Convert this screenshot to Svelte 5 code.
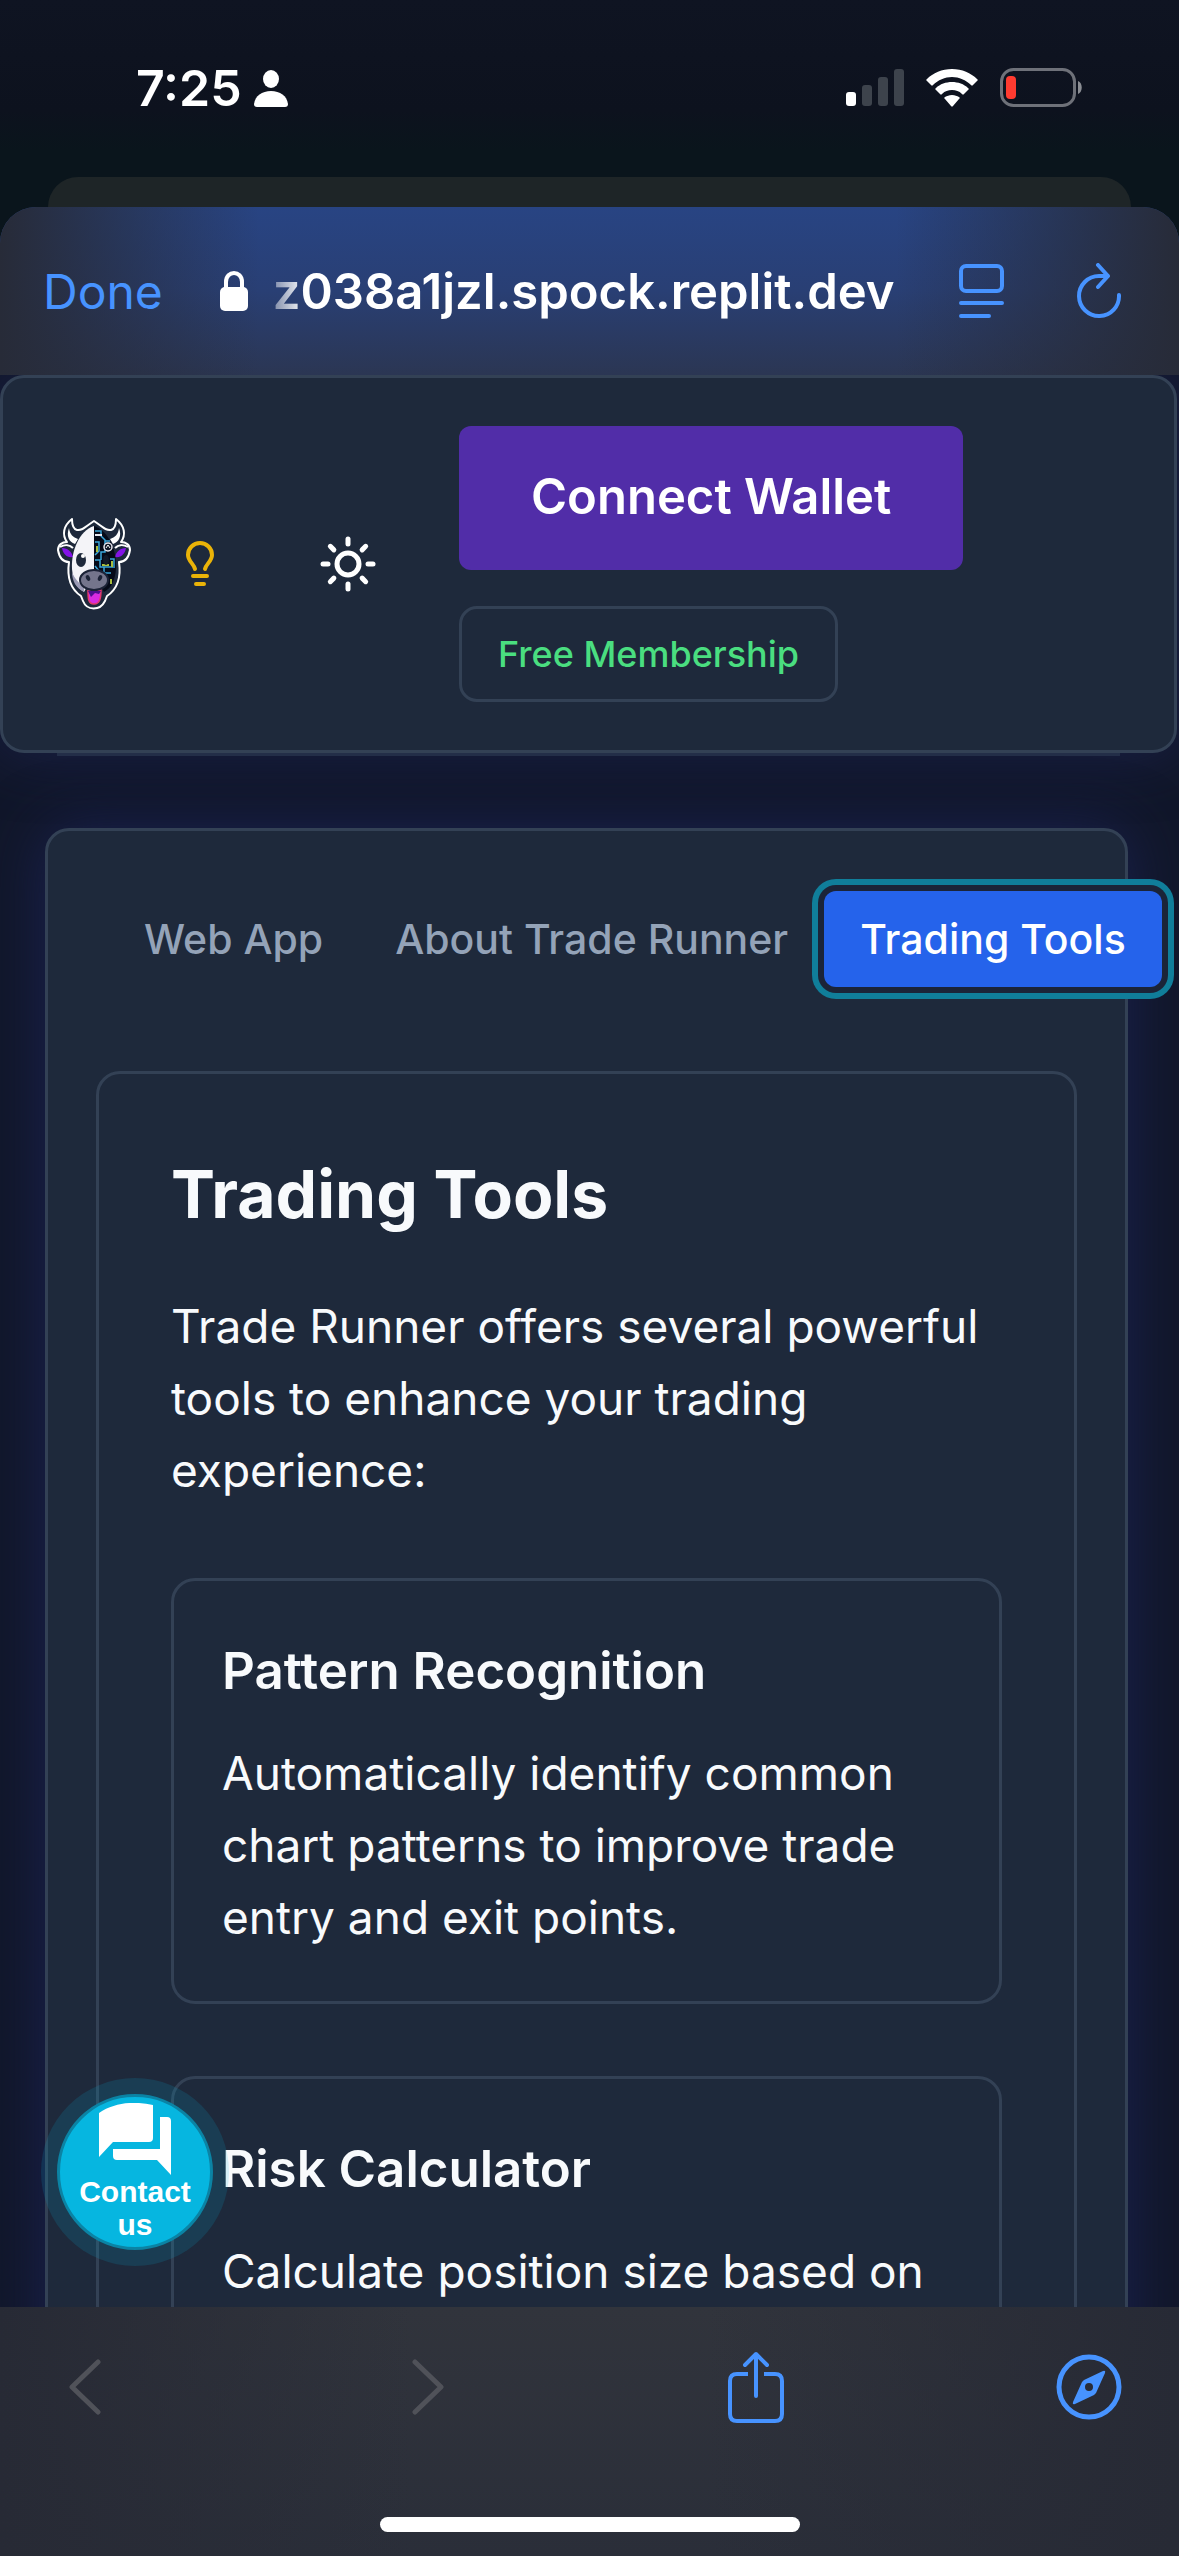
<script>
  const tabs = ['Web App', 'About Trade Runner', 'Trading Tools'];
  let active = $state('Trading Tools');
  const tools = [
    {
      title: 'Pattern Recognition',
      text: 'Automatically identify common chart patterns to improve trade entry and exit points.'
    },
    {
      title: 'Risk Calculator',
      text: 'Calculate position size based on'
    }
  ];
  const rays = [0, 45, 90, 135, 180, 225, 270, 315];
</script>

<div class="phone">
  <header class="status">
    <div class="clock">
      <span>7:25</span>
      <svg width="34" height="37" viewBox="0 0 34 37" fill="#fff" aria-hidden="true">
        <ellipse cx="17" cy="9" rx="8" ry="9" />
        <path d="M3 37C1 37 0 36 0 34 1 26 8 21 17 21s16 5 17 13c0 2-1 3-3 3z" />
      </svg>
    </div>
    <div class="signals">
      <svg width="58" height="38" viewBox="0 0 58 38" aria-hidden="true">
        <rect x="0" y="23" width="10" height="14" rx="3" fill="#fff" />
        <g fill="#3d434c">
          <rect x="16" y="16" width="10" height="21" rx="3" />
          <rect x="32" y="8" width="10" height="29" rx="3" />
          <rect x="48" y="0" width="10" height="37" rx="3" />
        </g>
      </svg>
      <svg width="52" height="38" viewBox="0 0 52 38" fill="#fff" aria-hidden="true">
        <path d="M26 0C36 0 45 4 51 10c1 1 1 1 0 2l-4 4c-1 1-1 1-2 0-5-5-12-8-19-8S12 11 7 16c-1 1-1 1-2 0l-4-4c-1-1-1-1 0-2C7 4 16 0 26 0z" />
        <path d="M26 13c6 0 12 2 16 6 1 1 1 1 0 2l-4 4c-1 1-1 1-2 0-3-3-6-4-10-4s-7 1-10 4c-1 1-1 1-2 0l-4-4c-1-1-1-1 0-2 4-4 10-6 16-6z" />
        <path d="M26 26c3 0 5 1 7 2 1 1 1 1 0 2l-6 7c-1 1-1 1-2 0l-6-7c-1-1-1-1 0-2 2-1 4-2 7-2z" />
      </svg>
      <svg width="83" height="40" viewBox="0 0 83 40" aria-hidden="true">
        <rect x="1.500" y="1.500" width="73" height="36" rx="12" fill="none" stroke="#6e7179" stroke-width="3" />
        <rect x="6" y="8" width="10" height="23" rx="4" fill="#ff3b30" />
        <path d="M78 13c5 2 5 11 0 13z" fill="#8a8d93" />
      </svg>
    </div>
  </header>

  <div class="sheet-behind"></div>

  <section class="sheet">
    <div class="browser-bar">
      <button class="done">Done</button>
      <div class="address">
        <svg width="30" height="40" viewBox="0 0 30 40" aria-hidden="true">
          <path d="M7 19V11c0-12 16-12 16 0v8" fill="none" stroke="#fff" stroke-width="4" />
          <rect x="1" y="16" width="28" height="24" rx="5" fill="#fff" />
        </svg>
        <span class="url">z038a1jzl.spock.replit.dev</span>
      </div>
      <button class="icon" aria-label="Page menu">
        <svg width="46" height="56" viewBox="0 0 46 56" fill="none" stroke="#4793ff" stroke-width="4" stroke-linecap="round">
          <rect x="2" y="3" width="41" height="25" rx="5" />
          <path d="M2 40h41M2 53h28" />
        </svg>
      </button>
      <button class="icon" aria-label="Reload">
        <svg width="46" height="56" viewBox="0 0 46 56" fill="none" stroke="#4793ff" stroke-width="4" stroke-linecap="round" stroke-linejoin="round">
          <path d="M42 32A20 20 0 1 1 22 13h9M21 2l10 11-10 11" />
        </svg>
      </button>
    </div>

    <div class="page">
      <div class="topbar">
        <svg class="logo" width="74" height="94" viewBox="0 0 74 94" aria-label="Trade Runner" role="img">
          <path d="M15 2C6 9 5 18 10 25 5 25 1 28 1 33c1 6 4 12 11 12-2 14 0 26 12 34l2 5c4 10 17 10 22 0l2-5c12-8 14-20 12-34 7 0 10-6 11-12 0-5-4-8-9-8 5-7 4-16-5-23 0 6-1 10-5 11-6 1-9-4-17-9-8 5-11 10-17 9-4-1-5-5-5-11z" fill="#1e293b" stroke="#fff" stroke-width="2" stroke-linejoin="round" />
          <path d="M12 11c1 7 4 9 9 11l-3 5c-6-2-9-8-6-16zM62 11c-1 7-4 9-9 11l3 5c6-2 9-8 6-16z" fill="#fff" />
          <path d="M3 30c5-3 10-2 13 1M71 30c-5-3-10-2-13 1" fill="none" stroke="#fff" stroke-width="2" />
          <path d="M5 31c6 0 10 4 11 9-6 1-10-3-11-9zM69 31c-6 0-10 4-11 9 6 1 10-3 11-9z" fill="#8312e6" />
          <path d="M37 9C22 14 14 34 15 52c1 12 5 19 12 23l10-18z" fill="#f4f4f8" />
          <path d="M37 9c15 5 23 25 22 43-1 12-5 19-12 23L37 57z" fill="#050a18" />
          <path d="M15 55c3 8 7 10 12 16v4c-8-4-12-11-12-20z" fill="#9a9ab4" />
          <g fill="none" stroke="#3aa5d8" stroke-width="1.500">
            <path d="M38 14h6v5l4 4v12h-4v8M38 25h4v9l-4 4M38 43h5v7h15M48 24h5M53 42h4v7M47 50v6h7M38 49l4 5" />
          </g>
          <path d="M40 29v6M55 44v6M54 62v5M45 48h7" stroke="#a8bd3d" stroke-width="2" />
          <path d="M38 18h7" stroke="#e8e8f0" stroke-width="2" />
          <circle cx="51" cy="30" r="4" fill="#111827" stroke="#e8e8f0" stroke-width="1.500" />
          <path d="M49 31l2-3 2 3" fill="none" stroke="#fff" />
          <ellipse cx="24" cy="43" rx="5" ry="7" fill="#1e293b" />
          <circle cx="26" cy="39" r="2" fill="#fff" />
          <ellipse cx="49" cy="43" rx="3" ry="5" fill="#111827" />
          <path d="M31 73h13c0 8-1 14-7 14s-6-6-6-14z" fill="#d62be0" stroke="#e23a6c" stroke-width="1.500" />
          <path d="M31 74h13l-2 3-4-1-4 4z" fill="#4a0f8c" />
          <ellipse cx="37" cy="63" rx="14" ry="10" fill="#74758c" stroke="#1b2236" stroke-width="2" />
          <ellipse cx="31" cy="61" rx="2" ry="3" fill="#1b2236" transform="rotate(-25 31 61)" />
          <ellipse cx="43" cy="61" rx="2" ry="3" fill="#1b2236" transform="rotate(25 43 61)" />
        </svg>
        <button class="tip" aria-label="Tips">
          <svg width="30" height="46" viewBox="0 0 30 46" fill="none" stroke="#eab308" stroke-width="4" stroke-linecap="round">
            <path d="M10 28C9 23 3 20 3 14a12 12 0 0 1 24 0c0 6-6 9-7 14M8 35h14M11 43h8" />
          </svg>
        </button>
        <button class="theme" aria-label="Toggle theme">
          <svg width="58" height="58" viewBox="-29 -29 58 58" fill="none" stroke="#fff" stroke-width="5" stroke-linecap="round">
            <circle r="11" />
            {#each rays as angle}
              <path d="M0-20v-5" transform="rotate({angle})" />
            {/each}
          </svg>
        </button>
        <div class="account">
          <button class="wallet">Connect Wallet</button>
          <span class="badge">Free Membership</span>
        </div>
      </div>

      <main class="panel">
        <nav class="tabs">
          {#each tabs as tab}
            <button class="tab" class:active={tab === active} onclick={() => (active = tab)}>{tab}</button>
          {/each}
        </nav>
        <article class="content">
          <h2>Trading Tools</h2>
          <p>Trade Runner offers several powerful tools to enhance your trading experience:</p>
          {#each tools as tool}
            <section class="tool">
              <h3>{tool.title}</h3>
              <p>{tool.text}</p>
            </section>
          {/each}
        </article>
      </main>

      <button class="contact">
        <svg width="72" height="72" viewBox="0 0 72 72" fill="#fff" aria-hidden="true">
          <path d="M0 10C16-1 36-2 54 2v33q0 4-4 4H14L0 54z" />
          <path d="M61 14h7q4 0 4 4v54L58 57H18q-4 0-4-4v-7h47z" />
        </svg>
        <span>Contact us</span>
      </button>
    </div>

    <footer class="toolbar">
      <div class="actions">
        <button class="icon" aria-label="Back" disabled>
          <svg width="44" height="56" viewBox="0 0 44 56" fill="none" stroke="#505259" stroke-width="5" stroke-linecap="round" stroke-linejoin="round">
            <path d="M30 3L4 28l26 25" />
          </svg>
        </button>
        <button class="icon" aria-label="Forward" disabled>
          <svg width="44" height="56" viewBox="0 0 44 56" fill="none" stroke="#505259" stroke-width="5" stroke-linecap="round" stroke-linejoin="round">
            <path d="M14 3l26 25-26 25" />
          </svg>
        </button>
        <button class="icon" aria-label="Share">
          <svg width="58" height="72" viewBox="0 0 58 72" fill="none" stroke="#4793ff" stroke-width="4" stroke-linecap="round" stroke-linejoin="round">
            <path d="M29 45V3M18 14L29 3l11 11" />
            <path d="M21 23H10q-7 0-7 7v33q0 7 7 7h38q7 0 7-7V30q0-7-7-7H37" stroke-linecap="butt" />
          </svg>
        </button>
        <button class="icon" aria-label="Open in browser">
          <svg width="66" height="66" viewBox="0 0 66 66" aria-hidden="true">
            <circle cx="33" cy="33" r="30" fill="none" stroke="#4793ff" stroke-width="5" />
            <path fill="#4793ff" fill-rule="evenodd" d="M47 17q3-1 2 2l-9 20-2 2-19 9q-3 1-2-2l9-20 2-2zM33 29a4 4 0 1 0 0 8 4 4 0 0 0 0-8z" />
          </svg>
        </button>
      </div>
      <div class="home"></div>
    </footer>
  </section>
</div>

<style>
  :global(body) {
    background: #0b141c;
  }
  .phone {
    box-sizing: border-box;
    height: 100vh;
    display: flex;
    flex-direction: column;
    overflow: hidden;
    color: #fff;
    font-family: Inter, 'Liberation Sans', sans-serif;
    background: linear-gradient(#0f1422 0, #0d121e 110px, #0a151c 150px);
  }
  .phone * {
    box-sizing: border-box;
  }
  button {
    margin: 0;
    padding: 0;
    border: 0;
    background: none;
    color: inherit;
    font: inherit;
    cursor: pointer;
  }
  svg {
    display: block;
    flex: none;
  }
  .status {
    flex: none;
    height: 177px;
    padding: 56px 96px 0 136px;
    display: flex;
    align-items: flex-start;
    justify-content: space-between;
  }
  .clock {
    display: flex;
    align-items: center;
    gap: 12px;
    height: 64px;
    font-size: 50px;
    font-weight: 600;
  }
  .signals {
    display: flex;
    align-items: center;
    gap: 22px;
    height: 64px;
  }
  .sheet-behind {
    flex: none;
    height: 30px;
    margin: 0 48px;
    border-radius: 30px 30px 0 0;
    background: #1e2527;
  }
  .sheet {
    flex: 1;
    min-height: 0;
    display: flex;
    flex-direction: column;
    border-radius: 36px 36px 0 0;
    overflow: hidden;
  }
  .browser-bar {
    flex: none;
    height: 168px;
    padding: 0 56px 0 43px;
    display: flex;
    align-items: center;
    background:
      linear-gradient(90deg, #272b38 0, #272b3800 22%, #272b3800 76%, #272b38 100%),
      linear-gradient(#284483 0, #293f74 50%, #2b3653 100%);
  }
  .done {
    color: #4793ff;
    font-size: 48px;
  }
  .address {
    flex: 1;
    display: flex;
    align-items: center;
    gap: 24px;
    padding-left: 56px;
    white-space: nowrap;
    font-size: 49px;
    font-weight: 600;
  }
  .url {
    -webkit-mask-image: linear-gradient(90deg, #0006 0, #000 32px);
    mask-image: linear-gradient(90deg, #0006 0, #000 32px);
  }
  .browser-bar .icon + .icon {
    margin-left: 72px;
  }
  .page {
    position: relative;
    flex: 1;
    min-height: 0;
    overflow: hidden;
    padding-right: 2px;
    background: #11172a;
  }
  .topbar {
    display: flex;
    align-items: center;
    padding: 48px 54px;
    border: 3px solid #334155;
    border-radius: 24px;
    background: #1e293b;
    box-shadow:
      0 60px 0 -57px #232e48,
      0 0 60px #1a2048;
  }
  .tip {
    margin-left: 54px;
  }
  .theme {
    margin-left: 104px;
  }
  .account {
    margin-left: 82px;
    display: flex;
    flex-direction: column;
    align-items: flex-start;
    gap: 36px;
  }
  .wallet {
    height: 144px;
    padding: 0 72px 4px;
    border-radius: 12px;
    background: #512da8;
    font-size: 49px;
    font-weight: 600;
  }
  .badge {
    padding: 21px 36px;
    border: 3px solid #334155;
    border-radius: 18px;
    color: #4ade80;
    font-size: 36px;
    line-height: 48px;
    font-weight: 500;
  }
  .panel {
    margin: 75px 49px 0 45px;
    padding: 60px 48px;
    border: 3px solid #334155;
    border-radius: 24px;
    background: #1e293b;
    box-shadow: 0 0 60px #1a2150;
  }
  .tabs {
    display: flex;
    width: max-content;
    padding-left: 12px;
  }
  .tab {
    height: 96px;
    padding: 0 36px;
    border-radius: 12px;
    color: #94a3b8;
    font-size: 41px;
    font-weight: 500;
    white-space: nowrap;
  }
  .tab.active {
    background: #2563eb;
    color: #fff;
    box-shadow:
      0 0 0 6px #1b2438,
      0 0 0 12px #107e9a;
  }
  .content {
    margin-top: 84px;
    padding: 72px;
    border: 3px solid #334155;
    border-radius: 24px;
    color: #f8fafc;
  }
  h2,
  h3,
  p {
    margin: 0;
  }
  h2 {
    font-size: 66px;
    line-height: 96px;
    font-weight: 700;
  }
  p {
    font-size: 46px;
    line-height: 72px;
  }
  h2 + p {
    margin: 48px 0 72px;
  }
  .tool {
    padding: 48px;
    border: 3px solid #334155;
    border-radius: 24px;
  }
  .tool + .tool {
    margin-top: 72px;
  }
  h3 {
    margin-bottom: 24px;
    font-size: 51px;
    line-height: 84px;
    font-weight: 600;
  }
  .contact {
    position: absolute;
    left: 57px;
    bottom: 57px;
    width: 156px;
    height: 156px;
    padding-top: 6px;
    display: flex;
    flex-direction: column;
    align-items: center;
    border: 3px solid #0b83a4;
    border-radius: 50%;
    background: #06b6e0;
    box-shadow: 0 0 0 16px #06b6e026;
    font-family: 'Liberation Sans', sans-serif;
    font-size: 30px;
    line-height: 33px;
    font-weight: 700;
  }
  .toolbar {
    flex: none;
    height: 249px;
    padding: 44px 57px 24px;
    display: flex;
    flex-direction: column;
    justify-content: space-between;
    align-items: center;
    background:
      linear-gradient(90deg, #272a35 0, #272a3500 35%, #272a3500 60%, #272a35 100%),
      linear-gradient(#31343c, #2a2e39);
  }
  .actions {
    width: 100%;
    display: flex;
    align-items: center;
    justify-content: space-between;
  }
  .actions .icon {
    width: 66px;
    display: flex;
    justify-content: center;
  }
  .home {
    width: 420px;
    height: 15px;
    border-radius: 8px;
    background: #fff;
  }
</style>
